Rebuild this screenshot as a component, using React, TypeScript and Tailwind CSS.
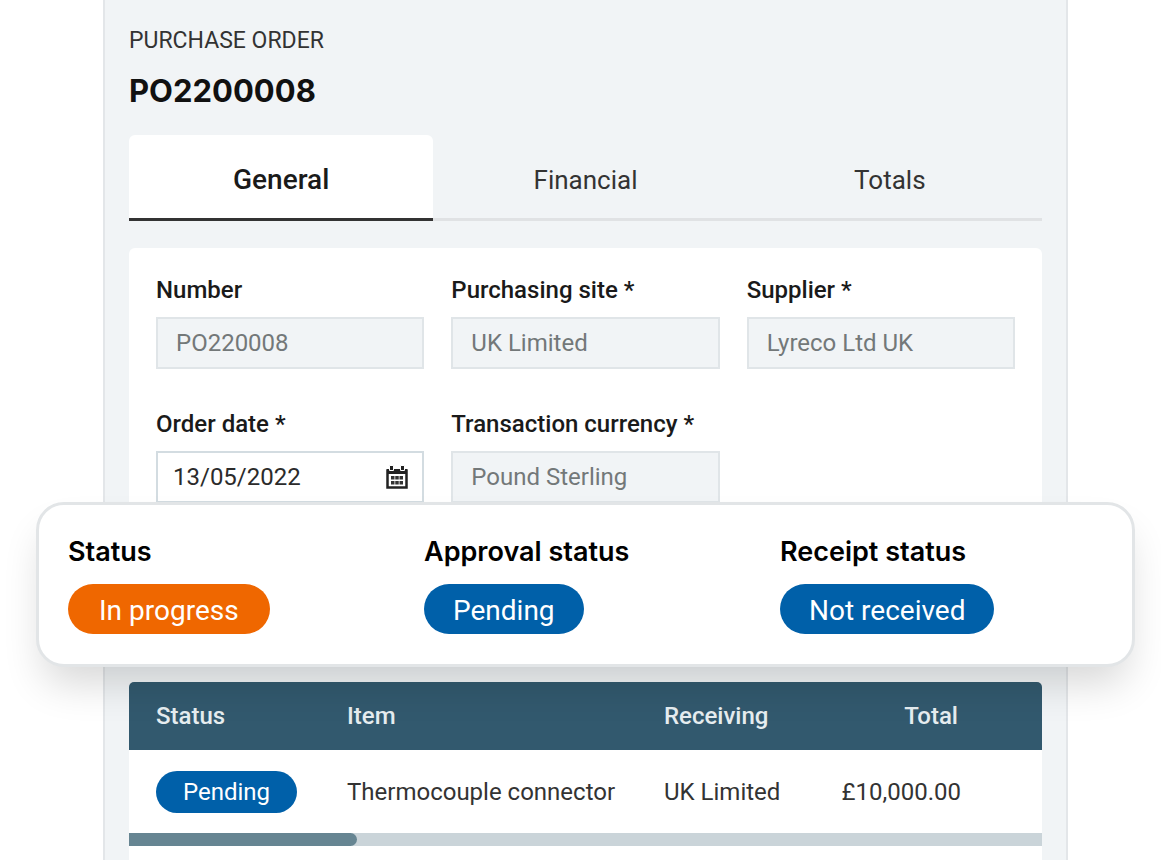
import React, { useState } from "react";
import clsx from "clsx";

const tabs = ["General", "Financial", "Totals"];

const statuses = [
  { label: "Status", value: "In progress", className: "bg-[#ef6700] px-[31px]" },
  { label: "Approval status", value: "Pending", className: "bg-[#0060a9] px-[29px]" },
  { label: "Receipt status", value: "Not received", className: "bg-[#0060a9] px-[29px]" },
];

const rows = [
  { status: "Pending", item: "Thermocouple connector", receiving: "UK Limited", total: "£10,000.00" },
];

type FieldProps = {
  id: string;
  label: string;
  value: string;
};

const FieldLabel = ({ id, label }: { id: string; label: string }) => (
  <label htmlFor={id} className="text-2xl leading-7 font-medium text-[#1a1a1a]">
    {label}
  </label>
);

const ReadOnlyField = ({ id, label, value }: FieldProps) => (
  <div className="flex min-w-0 flex-col gap-[13px]">
    <FieldLabel id={id} label={label} />
    <input
      id={id}
      readOnly
      defaultValue={value}
      className="h-[52px] w-full border-2 border-[#e0e5e8] bg-[#f1f4f6] px-[18px] text-2xl text-[#737879]"
    />
  </div>
);

const CalendarIcon = () => (
  <svg viewBox="0 0 22 24" className="h-6 w-[22px]" aria-hidden="true">
    <path d="M1.500 5.500h19v17h-19z" fill="#fff" stroke="#222" strokeWidth="2.500" />
    <path d="M1 4h20v5H1z" fill="#222" />
    <path d="M3.500 0.500h4v5h-4zM14.500 0.500h4v5h-4z" fill="#222" stroke="#fff" strokeWidth="1" />
    <path
      d="M5 11h3.500v3.500H5zM9.250 11h3.500v3.500h-3.500zM13.500 11H17v3.500h-3.500zM5 16h3.500v3.500H5zM9.250 16h3.500v3.500h-3.500zM13.500 16H17v3.500h-3.500z"
      fill="#333"
    />
  </svg>
);

const DateField = ({ id, label, value }: FieldProps) => (
  <div className="flex min-w-0 flex-col gap-[13px]">
    <FieldLabel id={id} label={label} />
    <div className="flex h-[52px] items-center border-2 border-[#d3dce1] bg-white pr-[14px] pl-[15px]">
      <input
        id={id}
        defaultValue={value}
        className="min-w-0 flex-1 bg-transparent text-2xl text-[#2b2b2b] outline-none"
      />
      <button type="button" aria-label="Open calendar">
        <CalendarIcon />
      </button>
    </div>
  </div>
);

const StatusCard = () => (
  <section className="relative z-10 -mx-[93px] -mt-[28px] grid h-[165px] grid-cols-3 gap-x-1 rounded-[28px] border-3 border-[#e2e5e7] bg-white pt-[31px] pl-[29px] shadow-[0_24px_40px_-8px_rgba(0,0,0,0.16)]">
    {statuses.map((s) => (
      <div key={s.label} className="flex flex-col items-start gap-4">
        <h2 className="font-[Inter] text-[27px] leading-8 font-semibold text-black">
          {s.label}
        </h2>
        <span
          className={clsx(
            "flex h-[50px] items-center rounded-full pt-1 text-[28px] whitespace-nowrap text-white",
            s.className
          )}
        >
          {s.value}
        </span>
      </div>
    ))}
  </section>
);

const LinesTable = () => (
  <div className="mt-[15px] overflow-hidden rounded-t-[5px] bg-white">
    <table className="w-full table-fixed text-left text-2xl text-[#333]">
      <thead className="h-[68px] bg-[#32596e] text-[#e6edf0]">
        <tr>
          <th className="w-[191px] pl-[27px] font-medium">Status</th>
          <th className="w-[317px] pl-[27px] font-medium">Item</th>
          <th className="w-[173px] pl-[27px] font-medium">Receiving</th>
          <th className="pr-[84px] text-right font-medium">Total</th>
        </tr>
      </thead>
      <tbody>
        {rows.map((row) => (
          <tr key={row.item} className="h-[83px]">
            <td className="pl-[27px]">
              <span className="inline-flex h-[42px] items-center rounded-full bg-[#0060a9] px-[27px] text-white">
                {row.status}
              </span>
            </td>
            <td className="pl-[27px] whitespace-nowrap">{row.item}</td>
            <td className="pl-[27px] whitespace-nowrap">{row.receiving}</td>
            <td className="pr-[81px] text-right">{row.total}</td>
          </tr>
        ))}
      </tbody>
    </table>
    <div className="h-[13px] bg-[#cad4d9]">
      <div className="h-full w-1/4 rounded-r-full bg-[#668592]" />
    </div>
    <div className="h-[14px]" />
  </div>
);

const App = () => {
  const [activeTab, setActiveTab] = useState("General");

  return (
    <main className="min-h-screen bg-white pr-[26px] pl-[36px] font-[Roboto,sans-serif]">
      <div className="mx-[67px] border-x-2 border-[#e3e6e9] bg-[#f1f4f6] px-[24px] pt-[25px]">
        <header>
          <p className="text-[23px] leading-8 text-[#333]">PURCHASE ORDER</p>
          <h1 className="mt-[14px] font-[Inter] text-[31px] leading-10 font-bold text-[#111]">
            PO2200008
          </h1>
        </header>

        <div role="tablist" className="mt-[24px] grid h-[86px] grid-cols-3">
          {tabs.map((tab) => (
            <button
              key={tab}
              type="button"
              role="tab"
              aria-selected={activeTab === tab}
              onClick={() => setActiveTab(tab)}
              className={clsx(
                "border-b-3 pt-[7px]",
                activeTab === tab
                  ? "rounded-t-md border-[#333] bg-white text-[28px] font-medium text-[#1a1a1a]"
                  : "border-[#e0e2e4] text-[26px] text-[#333]"
              )}
            >
              {tab}
            </button>
          ))}
        </div>

        <form className="mt-[27px] grid grid-cols-3 gap-x-[27px] gap-y-[41px] rounded-md bg-white px-[27px] pt-7 pb-[27px]">
          <ReadOnlyField id="number" label="Number" value="PO220008" />
          <ReadOnlyField id="site" label="Purchasing site *" value="UK Limited" />
          <ReadOnlyField id="supplier" label="Supplier *" value="Lyreco Ltd UK" />
          <DateField id="order-date" label="Order date *" value="13/05/2022" />
          <ReadOnlyField id="currency" label="Transaction currency *" value="Pound Sterling" />
        </form>

        <StatusCard />
        <LinesTable />
      </div>
    </main>
  );
};

export default App;
